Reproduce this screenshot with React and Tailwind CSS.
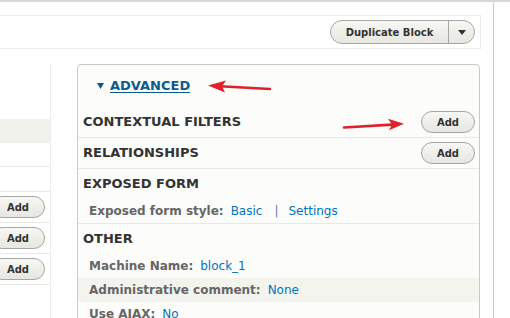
import React from "react";

function Btn({ children, className = "" }) {
  return (
    <div
      className={
        "shrink-0 h-[22px] w-[54px] rounded-full border border-[#a6a6a6] bg-gradient-to-b from-[#f7f7f3] to-[#e7e7e1] flex items-center justify-center text-[10px] font-bold text-[#333] " +
        className
      }
    >
      {children}
    </div>
  );
}

export default function App() {
  return (
    <div className="relative w-[510px] h-[318px] overflow-hidden bg-white font-['DejaVu_Sans',sans-serif]">
      <div className="h-[2px] bg-[#d8d8d0]" />
      <div className="w-[494px] h-[316px] border-r border-[#c8c8c8]">
        <div className="pt-[13px]">
          <div className="w-[481px] h-[34px] border-t border-b border-r border-[#ebebeb] flex items-center justify-end pr-[5px]">
            <div className="flex h-[24px] rounded-full border border-[#a6a6a6] bg-gradient-to-b from-[#f7f7f3] to-[#e7e7e1] text-[10px] font-bold text-[#333]">
              <div className="w-[118px] flex items-center justify-center border-r border-[#a6a6a6]">
                Duplicate Block
              </div>
              <div className="w-[25px] flex items-center justify-center">
                <svg width="8" height="5" viewBox="0 0 8 5">
                  <path d="M0 0 L8 0 L4 5 Z" fill="#333" />
                </svg>
              </div>
            </div>
          </div>
        </div>
        <div className="flex mt-[15px] gap-[26px]">
          {/* left column */}
          <div className="w-[51px] h-[260px] border-r border-[#ececec]">
            <div className="h-[55px]" />
            <div className="h-[24px] bg-[#f2f2ed]" />
            <div className="h-[24px] border-b border-[#e8e8e4]" />
            <div className="h-[25px] border-b border-[#e8e8e4]" />
            {[0, 1, 2].map((i) => (
              <div
                key={i}
                className="h-[31px] border-b border-[#e8e8e4] flex items-center justify-end pr-[5px]"
              >
                <Btn>Add</Btn>
              </div>
            ))}
          </div>
          {/* right panel */}
          <div className="w-[403px] h-[270px] border border-[#c9c9c9] rounded-t-[4px] bg-[#fcfcfa]">
            <div className="h-[42px] flex items-center pl-[19px]">
              <svg width="7" height="6" viewBox="0 0 7 6" className="mr-[6px]">
                <path d="M0 0 L7 0 L3.5 6 Z" fill="#0d5a8c" />
              </svg>
              <span className="text-[13px] font-bold text-[#0d5a8c] underline underline-offset-[2px]">
                ADVANCED
              </span>
            </div>
            <div className="h-[31px] border-b border-[#e8e8e4] flex items-center justify-between pl-[5px] pr-[4px]">
              <span className="text-[13px] font-bold text-[#333]">CONTEXTUAL FILTERS</span>
              <Btn>Add</Btn>
            </div>
            <div className="h-[31px] border-b border-[#e8e8e4] flex items-center justify-between pl-[5px] pr-[4px]">
              <span className="text-[13px] font-bold text-[#333]">RELATIONSHIPS</span>
              <Btn>Add</Btn>
            </div>
            <div className="border-b border-[#e8e8e4]">
              <div className="h-[30px] flex items-center pl-[5px] text-[13px] font-bold text-[#333]">
                EXPOSED FORM
              </div>
              <div className="h-[24px] flex items-center pl-[11px] text-[12px]">
                <span className="font-bold text-[#666]">Exposed form style:</span>
                <span className="ml-[7px] text-[#0074bd]">Basic</span>
                <span className="ml-[12px] mr-[10px] text-[#4a7cab]">|</span>
                <span className="text-[#0074bd]">Settings</span>
              </div>
            </div>
            <div>
              <div className="h-[30px] flex items-center pl-[5px] text-[13px] font-bold text-[#333]">
                OTHER
              </div>
              <div className="h-[24px] flex items-center pl-[11px] text-[12px]">
                <span className="font-bold text-[#666]">Machine Name:</span>
                <span className="ml-[7px] text-[#0074bd]">block_1</span>
              </div>
              <div className="h-[24px] flex items-center pl-[11px] text-[12px] bg-[#f3f4ee]">
                <span className="font-bold text-[#666]">Administrative comment:</span>
                <span className="ml-[7px] text-[#0074bd]">None</span>
              </div>
              <div className="h-[24px] flex items-center pl-[11px] text-[12px]">
                <span className="font-bold text-[#666]">Use AJAX:</span>
                <span className="ml-[7px] text-[#0074bd]">No</span>
              </div>
            </div>
          </div>
        </div>
      </div>
      {/* annotation arrows */}
      <svg
        className="absolute top-0 left-0 pointer-events-none"
        width="510"
        height="318"
        viewBox="0 0 510 318"
      >
        <line x1="270" y1="89" x2="220" y2="86.3" stroke="#e0202a" strokeWidth="2.6" strokeLinecap="round" />
        <path d="M208 85.5 L226 80.5 L222 86.3 L225 92.5 Z" fill="#e0202a" />
        <line x1="344" y1="127.5" x2="392" y2="124.6" stroke="#e0202a" strokeWidth="2.6" strokeLinecap="round" />
        <path d="M404 123.8 L388 118.8 L392 124.6 L389 130.3 Z" fill="#e0202a" />
      </svg>
    </div>
  );
}
